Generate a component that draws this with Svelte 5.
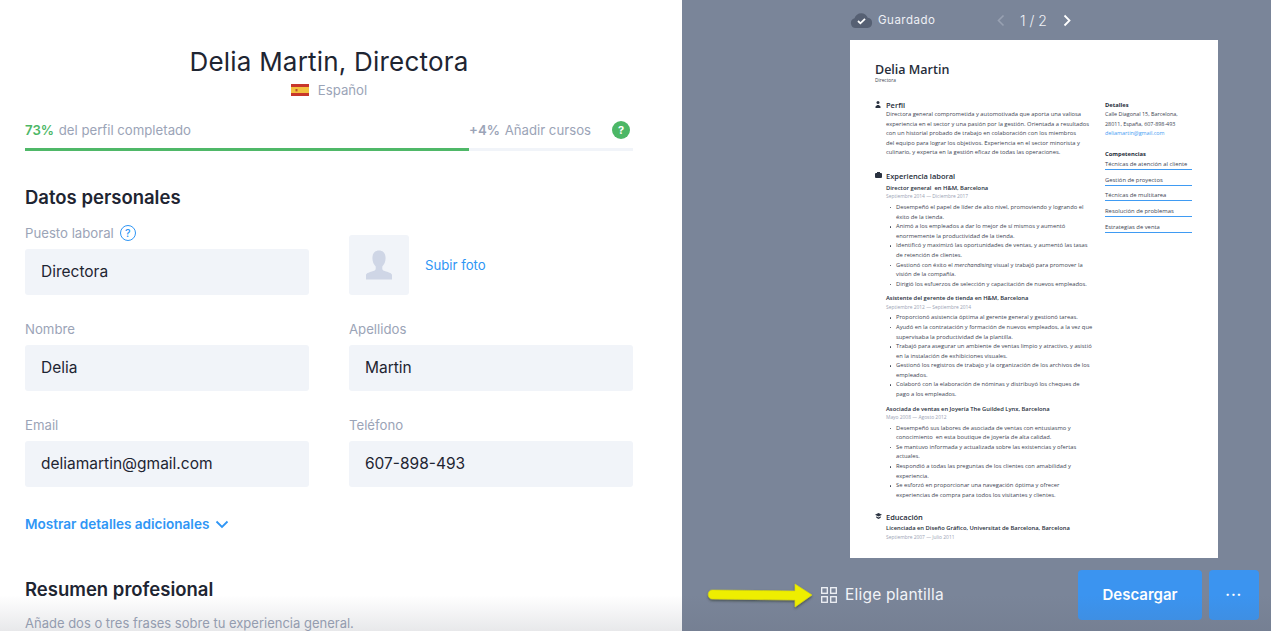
<script>
  const fields = [
    { label: 'Nombre', value: 'Delia' },
    { label: 'Apellidos', value: 'Martin' },
    { label: 'Email', value: 'deliamartin@gmail.com' },
    { label: 'Teléfono', value: '607-898-493' },
  ];
  const skills = [
    'Técnicas de atención al cliente',
    'Gestión de proyectos',
    'Técnicas de multitarea',
    'Resolución de problemas',
    'Estrategias de venta',
  ];
  const jobs = [
    {
      title: 'Director general  en H&M, Barcelona',
      date: 'Septiembre 2014 — Diciembre 2017',
      items: [
        ['Desempeñó el papel de líder de alto nivel, promoviendo y logrando el', 'éxito de la tienda.'],
        ['Animó a los empleados a dar lo mejor de sí mismos y aumentó', 'enormemente la productividad de la tienda.'],
        ['Identificó y maximizó las oportunidades de ventas, y aumentó las tasas', 'de retención de clientes.'],
        ['Gestionó con éxito el merchandising visual y trabajó para promover la', 'visión de la compañía.'],
        ['Dirigió los esfuerzos de selección y capacitación de nuevos empleados.'],
      ],
    },
    {
      title: 'Asistente del gerente de tienda en H&M, Barcelona',
      date: 'Septiembre 2012 — Septiembre 2014',
      items: [
        ['Proporcionó asistencia óptima al gerente general y gestionó tareas.'],
        ['Ayudó en la contratación y formación de nuevos empleados, a la vez que', 'supervisaba la productividad de la plantilla.'],
        ['Trabajó para asegurar un ambiente de ventas limpio y atractivo, y asistió', 'en la instalación de exhibiciones visuales.'],
        ['Gestionó los registros de trabajo y la organización de los archivos de los', 'empleados.'],
        ['Colaboró con la elaboración de nóminas y distribuyó los cheques de', 'pago a los empleados.'],
      ],
    },
    {
      title: 'Asociada de ventas en Joyería The Guilded Lynx, Barcelona',
      date: 'Mayo 2008 — Agosto 2012',
      items: [
        ['Desempeñó sus labores de asociada de ventas con entusiasmo y', 'conocimiento  en esta boutique de joyería de alta calidad.'],
        ['Se mantuvo informada y actualizada sobre las existencias y ofertas', 'actuales.'],
        ['Respondió a todas las preguntas de los clientes con amabilidad y', 'experiencia.'],
        ['Se esforzó en proporcionar una navegación óptima y ofrecer', 'experiencias de compra para todos los visitantes y clientes.'],
      ],
    },
  ];
  const summary = [
    'Directora general comprometida y automotivada que aporta una valiosa',
    'experiencia en el sector y una pasión por la gestión. Orientada a resultados',
    'con un historial probado de trabajo en colaboración con los miembros',
    'del equipo para lograr los objetivos. Experiencia en el sector minorista y',
    'culinario, y experta en la gestión eficaz de todas las operaciones.',
  ];
</script>

<div class="page">
  <main class="editor">
    <header class="head">
      <h1>Delia Martin, Directora</h1>
      <div class="lang">
        <svg width="18" height="12" viewBox="0 0 18 12"><rect width="18" height="12" fill="#c8362b"/><rect y="3" width="18" height="6" fill="#f3c13f"/><rect x="4.5" y="5" width="2" height="2.4" fill="#b8502a"/></svg>
        <span>Español</span>
      </div>
    </header>

    <div class="progress-row">
      <span><b class="pct">73%</b> del perfil completado</span>
      <span class="progress-right">
        <span><b class="plus">+4%</b> Añadir cursos</span>
        <span class="help">?</span>
      </span>
    </div>
    <div class="bar"><div class="bar-fill" style="width: 73%"></div></div>

    <h2 class="first">Datos personales</h2>

    <div class="grid">
      <div class="field">
        <div class="label">Puesto laboral <span class="hint">?</span></div>
        <div class="input">Directora</div>
      </div>
      <div class="photo-row">
        <div class="photo">
          <svg width="30" height="30" viewBox="0 0 30 30"><path fill="#cfd6e6" d="M15 .5c4.300 0 6.600 3.200 6.600 7.600 0 3.600-1.400 6.600-3.300 8.400v2.200c0 1.200 1 1.800 2.600 2.400 2.800 1 7.100 2 7.100 4v4.400H2v-4.400c0-2 4.300-3 7.100-4 1.600-.6 2.600-1.200 2.600-2.400v-2.200c-1.900-1.800-3.300-4.800-3.300-8.400C8.400 3.700 10.700.5 15 .5z"/></svg>
        </div>
        <span class="link">Subir foto</span>
      </div>
      {#each fields as f}
        <div class="field">
          <div class="label">{f.label}</div>
          <div class="input">{f.value}</div>
        </div>
      {/each}
    </div>

    <div class="more">
      Mostrar detalles adicionales
      <svg width="14" height="9" viewBox="0 0 14 9"><path d="M1.500 1.500 7 7l5.500-5.500" fill="none" stroke="#2f96f5" stroke-width="1.800"/></svg>
    </div>

    <h2 class="second">Resumen profesional</h2>
    <p class="sub">Añade dos o tres frases sobre tu experiencia general.</p>
  </main>

  <section class="preview">
    <div class="topbar">
      <span class="saved">
        <svg width="23" height="15" viewBox="0 0 23 15"><path fill="#566073" d="M6 15a5 5 0 0 1-1.500-9.800C5.400 2.200 8 .2 11.200.2c3 0 5.500 1.800 6.500 4.500A5.200 5.200 0 0 1 17.500 15z"/><path d="m8 8 2.400 2.300L15 5.800" fill="none" stroke="#fff" stroke-width="1.800"/></svg>
        Guardado
      </span>
      <span class="pager">
        <svg width="9" height="13" viewBox="0 0 9 13"><path d="M7.500 1.500 2.500 6.500l5 5" fill="none" stroke="#98a1b2" stroke-width="1.600"/></svg>
        <span class="pages">1 / 2</span>
        <svg width="9" height="13" viewBox="0 0 9 13"><path d="m1.500 1.500 5 5-5 5" fill="none" stroke="#fff" stroke-width="1.800"/></svg>
      </span>
    </div>

    <article class="paper">
      <div class="cv-name">Delia Martin</div>
      <div class="cv-role">Directora</div>
      <div class="cv-cols">
        <div class="cv-main">
          <section class="cv-sec">
            <h3>
              <svg class="cv-ico" width="6" height="7" viewBox="0 0 6 7"><circle cx="3" cy="1.600" r="1.500" fill="#2a3240"/><path d="M.5 7V5.500L2.200 4h1.600l1.700 1.500V7z" fill="#2a3240"/></svg>
              Perfil
            </h3>
            <p>{#each summary as line}<span class="ln">{line}</span>{/each}</p>
          </section>
          <section class="cv-sec exp">
            <h3>
              <svg class="cv-ico" width="7" height="6" viewBox="0 0 7 6"><rect y="1" width="7" height="5" rx="1" fill="#2a3240"/><rect x="2" width="3" height="2" fill="#2a3240"/></svg>
              Experiencia laboral
            </h3>
            {#each jobs as job}
              <div class="job">
                <div class="job-title">{job.title}</div>
                <div class="job-date">{job.date}</div>
                <ul>
                  {#each job.items as item}
                    <li>
                      {#each item as line}
                        {#if line.includes('merchandising')}
                          <span class="ln">Gestionó con éxito el <i>merchandising</i> visual y trabajó para promover la</span>
                        {:else}
                          <span class="ln">{line}</span>
                        {/if}
                      {/each}
                    </li>
                  {/each}
                </ul>
              </div>
            {/each}
          </section>
          <section class="cv-sec edu">
            <h3>
              <svg class="cv-ico" width="7" height="6" viewBox="0 0 7 6"><path d="M3.500 0 7 1.800 3.500 3.500 0 1.800z" fill="#2a3240"/><path d="M1.300 3.300 3.500 4.400l2.200-1.100v1.500L3.500 6 1.300 4.800z" fill="#2a3240"/></svg>
              Educación
            </h3>
            <div class="job-title">Licenciada en Diseño Gráfico, Universitat de Barcelona, Barcelona</div>
            <div class="job-date">Septiembre 2007 — Julio 2011</div>
          </section>
        </div>
        <aside class="cv-side">
          <h4>Detalles</h4>
          <div class="ln">Calle Diagonal 15, Barcelona,</div>
          <div class="ln">28011, España, 607-898-493</div>
          <div class="ln mail">deliamartin@gmail.com</div>
          <h4 class="skills-title">Competencias</h4>
          {#each skills as s}
            <div class="skill">{s}</div>
          {/each}
        </aside>
      </div>
    </article>

    <div class="actions">
      <span class="choose">
        <svg width="16" height="16" viewBox="0 0 16 16" fill="none" stroke="#f2f4f8" stroke-width="1.300"><rect x=".7" y=".7" width="5.600" height="5.600"/><rect x="9.700" y=".7" width="5.600" height="5.600"/><rect x=".7" y="9.700" width="5.600" height="5.600"/><rect x="9.700" y="9.700" width="5.600" height="5.600"/></svg>
        Elige plantilla
      </span>
      <button class="primary">Descargar</button>
      <button class="dots">•••</button>
    </div>
  </section>

  <div class="fade"></div>
  <svg class="arrow" width="112" height="36" viewBox="0 0 112 36">
    <defs>
      <filter id="sh" x="-10%" y="-40%" width="120%" height="190%"><feDropShadow dx="0" dy="1.500" stdDeviation="1.300" flood-color="#39403a" flood-opacity=".75"/></filter>
    </defs>
    <path filter="url(#sh)" fill="#eeee00" stroke="#d9d900" stroke-width=".6" stroke-linejoin="round" d="M7 13 90 14V7l17 11-17 12v-7L7 22c-5 0-5-9 0-9z"/>
  </svg>
</div>

<style>
  :global(body) {
    margin: 0;
  }
  .page {
    position: relative;
    display: flex;
    width: 1271px;
    height: 631px;
    overflow: hidden;
    font-family: Inter, "Noto Sans", sans-serif;
    background: #fff;
  }
  .editor {
    box-sizing: border-box;
    flex: 0 0 682px;
    padding: 43px 49px 0 25px;
    color: #1e2532;
  }
  .head {
    text-align: center;
  }
  h1 {
    margin: 0;
    font-size: 26px;
    line-height: 37px;
    font-weight: 400;
    letter-spacing: .2px;
  }
  .lang {
    display: flex;
    justify-content: center;
    align-items: center;
    gap: 9px;
    height: 20px;
    font-size: 13.200px;
    color: #9ba4b7;
  }
  .progress-row {
    display: flex;
    justify-content: space-between;
    align-items: center;
    margin-top: 20px;
    height: 19px;
    font-size: 13.200px;
    color: #9ba4b7;
  }
  .progress-right {
    display: flex;
    align-items: center;
    gap: 21px;
  }
  .pct {
    margin-right: 1px;
    color: #4cb766;
    font-weight: 600;
  }
  .plus {
    margin-right: 1px;
    font-weight: 600;
  }
  .help {
    display: grid;
    place-items: center;
    width: 18px;
    height: 18px;
    margin-right: 3px;
    border-radius: 50%;
    background: #4cb766;
    color: #fff;
    font-size: 11px;
    font-weight: 700;
  }
  .bar {
    height: 3px;
    margin-top: 9px;
    background: #f1f4f9;
  }
  .bar-fill {
    height: 100%;
    background: #4fb868;
  }
  h2 {
    margin: 0;
    font-size: 18.500px;
    line-height: 26px;
    font-weight: 600;
    color: #1e2532;
  }
  h2.first {
    margin-top: 33px;
  }
  .grid {
    display: grid;
    grid-template-columns: 284px 284px;
    column-gap: 40px;
    row-gap: 22px;
    margin-top: 11px;
  }
  .label {
    display: flex;
    align-items: center;
    gap: 6px;
    height: 24px;
    margin-bottom: 4px;
    font-size: 13.200px;
    color: #9ba4b7;
  }
  .hint {
    display: grid;
    place-items: center;
    box-sizing: border-box;
    width: 16px;
    height: 16px;
    border: 1.300px solid #2f96f5;
    border-radius: 50%;
    color: #2f96f5;
    font-size: 10.500px;
    font-weight: 500;
  }
  .input {
    box-sizing: border-box;
    height: 46px;
    padding: 0 16px;
    border-radius: 3px;
    background: #f1f4f9;
    font-size: 15.500px;
    line-height: 45px;
    color: #1e2532;
  }
  .photo-row {
    display: flex;
    align-items: center;
    gap: 16px;
    align-self: end;
  }
  .photo {
    display: grid;
    place-items: center;
    width: 60px;
    height: 60px;
    border-radius: 3px;
    background: #f1f4f9;
  }
  .link {
    color: #2f96f5;
    font-size: 13.200px;
  }
  .more {
    display: flex;
    align-items: center;
    gap: 6px;
    margin-top: 27px;
    height: 20px;
    color: #2f96f5;
    font-size: 13.550px;
    font-weight: 600;
  }
  h2.second {
    margin-top: 42px;
  }
  .sub {
    margin: 11px 0 0;
    font-size: 13px;
    line-height: 20px;
    color: #9ba4b7;
  }

  .preview {
    display: flex;
    flex-direction: column;
    flex: 1;
    padding-left: 168px;
    background: #7a8599;
    color: #fff;
  }
  .topbar {
    display: flex;
    align-items: center;
    height: 40px;
  }
  .saved {
    display: flex;
    align-items: center;
    gap: 5px;
    width: 146px;
    font-size: 11.500px;
    letter-spacing: .5px;
    color: #eef0f5;
  }
  .pager {
    display: flex;
    align-items: center;
    gap: 15px;
  }
  .pages {
    margin-right: 1px;
    font-size: 14px;
    font-weight: 300;
    color: #eef0f5;
  }
  .paper {
    box-sizing: border-box;
    width: 368px;
    height: 518px;
    padding: 22px 26px 0 25px;
    background: #fff;
    overflow: hidden;
    font-family: "Open Sans", "Noto Sans", sans-serif;
    color: #3d4452;
  }
  .cv-name {
    font-size: 12.500px;
    line-height: 15px;
    font-weight: 600;
    color: #262d3a;
  }
  .cv-role {
    font-size: 4.800px;
    line-height: 6px;
    color: #3d4452;
  }
  .cv-cols {
    display: flex;
    gap: 15px;
    margin-top: 17px;
  }
  .cv-main {
    width: 215px;
    flex: none;
  }
  .cv-side {
    flex: 1;
    font-size: 5.200px;
    line-height: 10px;
  }
  .cv-sec {
    padding-left: 11px;
  }
  .cv-sec h3 {
    position: relative;
    margin: 0;
    font-size: 7.500px;
    line-height: 10px;
    font-weight: 600;
    color: #262d3a;
  }
  .cv-ico {
    position: absolute;
    left: -11px;
    top: 1px;
  }
  .cv-sec p {
    margin: 0;
  }
  .ln {
    display: block;
    white-space: pre;
    font-size: 5.800px;
    line-height: 9.600px;
  }
  .exp {
    margin-top: 13px;
  }
  .job {
    margin-top: 3px;
  }
  .job + .job {
    margin-top: 5px;
  }
  .job-title {
    font-size: 5.800px;
    line-height: 9px;
    font-weight: 600;
    color: #262d3a;
    white-space: pre;
  }
  .job-date {
    margin-top: .5px;
    font-size: 4.900px;
    line-height: 7.500px;
    color: #9aa2b3;
  }
  ul {
    margin: 2px 0 0;
    padding: 0 0 0 10px;
  }
  li {
    list-style: none;
    position: relative;
  }
  li::before {
    content: "";
    position: absolute;
    left: -6.500px;
    top: 4px;
    width: 1.500px;
    height: 1.500px;
    border-radius: 50%;
    background: #3d4452;
  }
  .edu {
    margin-top: 12px;
  }
  .edu h3 {
    margin-bottom: 2px;
  }
  h4 {
    margin: 0;
    font-size: 5.800px;
    line-height: 10px;
    font-weight: 700;
    color: #262d3a;
  }
  .skills-title {
    margin-top: 10px;
  }
  .mail {
    color: #3f9bf3;
  }
  .cv-side .ln {
    font-size: 5.400px;
  }
  .skill {
    height: 10px;
    line-height: 10px;
    margin-bottom: 4.750px;
    border-bottom: 1px solid #3f9bf3;
    width: 87px;
    white-space: nowrap;
    font-size: 5.850px;
  }
  .actions {
    display: flex;
    align-items: center;
    flex: 1;
    margin-left: -32px;
  }
  .choose {
    display: flex;
    align-items: center;
    gap: 8px;
    width: 257px;
    margin-left: 3px;
    font-size: 15.500px;
    letter-spacing: .2px;
    color: #f2f4f8;
  }
  button {
    height: 50px;
    border: 0;
    border-radius: 4px;
    background: #3b94f0;
    color: #fff;
    font-family: inherit;
  }
  .primary {
    width: 124px;
    font-size: 15px;
    font-weight: 600;
  }
  .dots {
    width: 50px;
    margin-left: 7px;
    padding: 0;
    font-size: 7.500px;
    letter-spacing: 1.500px;
  }
  .fade {
    position: absolute;
    left: 0;
    right: 0;
    bottom: 0;
    height: 36px;
    background: linear-gradient(rgba(90, 95, 110, 0), rgba(90, 95, 110, .14));
    pointer-events: none;
  }
  .arrow {
    position: absolute;
    left: 705px;
    top: 577px;
  }
</style>
